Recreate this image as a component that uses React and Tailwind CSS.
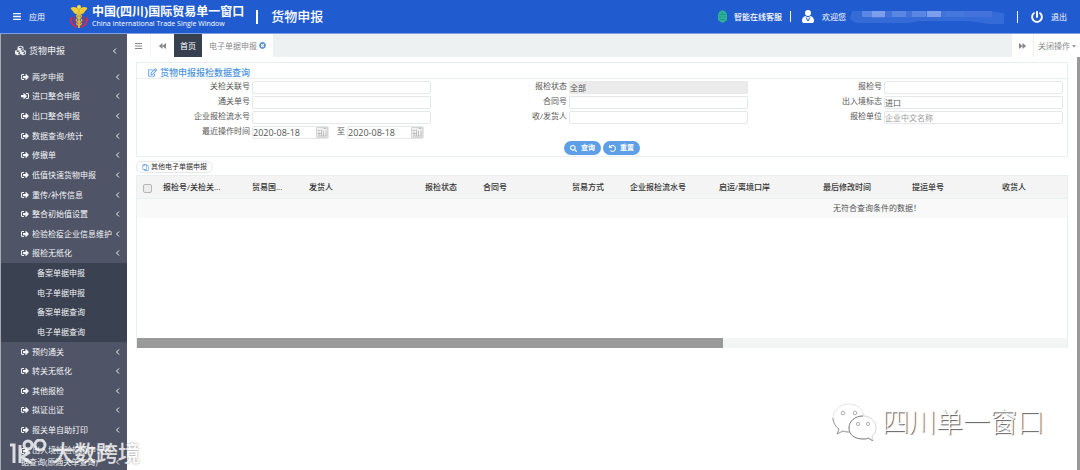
import React, { useState } from "react";
import {
  FaBackward,
  FaBars,
  FaCaretDown,
  FaCubes,
  FaForward,
  FaPowerOff,
  FaRegCopy,
  FaRegEdit,
  FaSearch,
  FaSignInAlt,
  FaSignOutAlt,
  FaTimesCircle,
  FaUndo,
} from "react-icons/fa";

const menuTop = [
  { label: "两步申报" },
  { label: "进口整合申报", icon: "in" },
  { label: "出口整合申报" },
  { label: "数据查询/统计" },
  { label: "修撤单" },
  { label: "低值快速货物申报" },
  { label: "重传/补传信息" },
  { label: "整合初始值设置" },
  { label: "检验检疫企业信息维护" },
  { label: "报检无纸化" },
];

const subMenu = ["备案单据申报", "电子单据申报", "备案单据查询", "电子单据查询"];

const menuBottom = [
  { label: "预约通关" },
  { label: "转关无纸化" },
  { label: "其他报检" },
  { label: "拟证出证" },
  { label: "报关单自助打印" },
];

const columns = [
  { label: "报检号/关检关...", width: "w-[89px]" },
  { label: "贸易国...", width: "w-[57px]" },
  { label: "发货人", width: "w-[116px]" },
  { label: "报检状态", width: "w-[58px]" },
  { label: "合同号", width: "w-[89px]" },
  { label: "贸易方式", width: "w-[58px]" },
  { label: "企业报检流水号", width: "w-[89px]" },
  { label: "启运/离境口岸", width: "w-[104px]" },
  { label: "最后修改时间", width: "w-[89px]" },
  { label: "提运单号", width: "w-[90px]" },
  { label: "收货人", width: "w-auto" },
];

// Customs staff emblem
const Emblem = () => (
  <svg viewBox="0 0 36 48" className="h-6 w-[18px]" aria-hidden="true">
    <path d="M3 25c-3 8 1 17 11 19M33 25c3 8-1 17-11 19" fill="none" stroke="#d92b45" strokeWidth="4" />
    <path d="M9 22c-4 7 0 14 9 17 9-3 13-10 9-17" fill="none" stroke="#c02c4c" strokeWidth="3" />
    <path d="M17 9C12 3 6 3 1 6c2 2 2 5 5 6 1 4 4 6 7 6l4 2zM19 9c5-6 11-6 16-3-2 2-2 5-5 6-1 4-4 6-7 6l-4 2z" fill="#f3cd32" />
    <circle cx="18" cy="4" r="4" fill="#f8dc4a" />
    <path d="M18 6v40" stroke="#f3cd32" strokeWidth="3" />
    <path d="M12 17c12 2 14 6 6 9s-7 6 0 8 6 5 0 7M24 17c-12 2-14 6-6 9s7 6 0 8-6 5 0 7" fill="none" stroke="#e8c12f" strokeWidth="2.5" />
  </svg>
);

const Robot = () => (
  <svg viewBox="0 0 20 26" className="h-[13px] w-[11px]" aria-hidden="true">
    <path d="M10 0l7 4 2 5v11l-4 3-5 3-5-3-4-3V9l2-5z" fill="#2bb292" />
    <path d="M4 9h12M4 14h4M12 14h4M5 19h10M10 4v3" stroke="#1f8a92" strokeWidth="1.4" />
  </svg>
);

const Person = () => (
  <svg viewBox="0 0 24 26" className="h-[13px] w-3" aria-hidden="true">
    <circle cx="12" cy="6" r="6" fill="#fff" />
    <path d="M7 12c-5 1-7 5-7 10 0 3 2 4 4 4h16c2 0 4-1 4-4 0-5-2-9-7-10l-5 3z" fill="#fff" />
    <path d="M8 15l4 7 4-7" fill="none" stroke="#215bd0" strokeWidth="2" />
  </svg>
);

// Masked user name
const MaskedName = () => (
  <svg viewBox="0 0 154 15" className="h-[15px] w-[154px]" aria-hidden="true">
    <path d="M2 2h136l16 2v11h-14l-22-3H70l-12 2H6l-6-4z" fill="#356bd6" />
    <path d="M12 2h130v6H12z" fill="#4272da" />
    <path d="M12 2h10v6H12zM42 2h14v6H42zM62 2h14v6H62z" fill="#5a87e2" />
    <path d="M22 2h12v7H22zM96 2h18v6H96z" fill="#4677dc" />
    <path d="M22 2h13v6H22zM77 2h14v6H77z" fill="#7b9fec" />
  </svg>
);

const Calendar = () => (
  <svg viewBox="0 0 24 24" className="h-3 w-3" aria-hidden="true">
    <path d="M1 3h22v20H1z" fill="#f1f1f1" stroke="#d5d5d5" strokeWidth="2" />
    <path d="M3 9h6M15 5h6M6 12v8M11 7v13M15 10v10M20 9v11M4 20h17M3 15h9" fill="none" stroke="#b5b5b5" strokeWidth="1.6" />
  </svg>
);

const Chevron = () => (
  <svg viewBox="0 0 5 8" className="h-2 w-[5px] shrink-0" aria-hidden="true">
    <path d="M4 1.5L1.5 4 4 6.5" fill="none" stroke="currentColor" />
  </svg>
);

const MenuItem = ({ label, icon }) => (
  <li className="flex flex-1">
    <a href="#" className="flex flex-1 items-center pl-5 pr-[7px]">
      {icon === "in" ? (
        <FaSignInAlt className="mr-[3px] h-2 w-2 shrink-0" />
      ) : (
        <FaSignOutAlt className="mr-[3px] h-2 w-2 shrink-0" />
      )}
      <span className="flex-1 whitespace-nowrap">{label}</span>
      <Chevron />
    </a>
  </li>
);

const Field = ({ id, label, value = "", placeholder, disabled }) => (
  <div className="flex h-[13px] justify-end">
    <label htmlFor={id} className="mr-[2px] leading-[10px]">
      {label}
    </label>
    <input
      id={id}
      type="text"
      defaultValue={value}
      placeholder={placeholder}
      readOnly={disabled}
      className={
        disabled
          ? "h-[13px] w-[179px] rounded-[2px] border border-[#e8e8e8] bg-[#ebebeb] leading-[11px] outline-none"
          : "h-[13px] w-[179px] rounded-[2px] border border-[#e5e8ea] bg-white leading-[11px] outline-none placeholder:text-[#999]"
      }
    />
  </div>
);

const DateField = ({ id, label, value, onChange }) => (
  <div className="flex h-[13px] w-[77px] rounded-[2px] border border-[#e5e8ea]">
    <input
      id={id}
      type="text"
      aria-label={label}
      value={value}
      onChange={(e) => onChange(e.target.value)}
      className="w-0 flex-1 text-[9px] leading-[11px] outline-none"
    />
    <button type="button" aria-label="选择日期" className="-mt-px">
      <Calendar />
    </button>
  </div>
);

const App = () => {
  const [startDate, setStartDate] = useState("2020-08-18");
  const [endDate, setEndDate] = useState("2020-08-18");

  return (
    <div className="relative flex min-h-screen flex-col overflow-hidden bg-white font-['Open_Sans','Noto_Sans_CJK_SC',sans-serif] text-[8px] text-[#555]">
      <header className="flex h-[34px] items-center border-b border-[#7fa1e3] bg-[#215bd0] pl-[13px] pr-[13px] text-white">
        <button type="button" className="flex w-[57px] items-center gap-2">
          <FaBars className="h-[9px] w-2" />
          应用
        </button>
        <Emblem />
        <div className="ml-1 whitespace-nowrap">
          <div className="text-[12px] font-bold leading-[14px]">中国(四川)国际贸易单一窗口</div>
          <div className="text-[7px] font-medium leading-[9px]">China International Trade Single Window</div>
        </div>
        <span className="ml-3 h-[14px] w-[2px] bg-white" />
        <h1 className="ml-[13px] whitespace-nowrap text-[13px] font-medium">货物申报</h1>
        <div className="ml-auto flex items-center whitespace-nowrap">
          <Robot />
          <a href="#" className="ml-1.5 font-medium">智能在线客服</a>
          <span className="ml-2 mr-[11px] h-[11px] w-px bg-white" />
          <Person />
          <span className="ml-2 mr-1">欢迎您</span>
          <MaskedName />
          <span className="ml-[13px] mr-[13px] h-3 w-px bg-white" />
          <FaPowerOff className="h-3 w-3" />
          <a href="#" className="ml-2">退出</a>
        </div>
      </header>

      <div className="flex flex-1">
        <nav className="flex w-[127px] shrink-0 flex-col border-l border-[#a4a9b5] bg-[#4f5467] text-[#f3f4f6]">
          <a href="#" className="flex h-[33px] items-center pl-3.5 pr-2.5 text-[9px]">
            <FaCubes className="mr-[3px] h-[11px] w-[11px]" />
            <span className="flex-1">货物申报</span>
            <Chevron />
          </a>
          <ul className="flex flex-1 flex-col leading-[12px]">
            {menuTop.map((item) => (
              <MenuItem key={item.label} label={item.label} icon={item.icon} />
            ))}
            <li className="flex flex-[4] bg-[#3a4150]">
              <ul className="flex flex-1 flex-col">
                {subMenu.map((label) => (
                  <li key={label} className="flex flex-1 items-center pl-9">
                    <a href="#">{label}</a>
                  </li>
                ))}
              </ul>
            </li>
            {menuBottom.map((item) => (
              <MenuItem key={item.label} label={item.label} />
            ))}
          </ul>
          <a href="#" className="flex h-[30px] items-end pl-5 pr-[7px] leading-[12px]">
            <span className="flex-1 whitespace-nowrap pb-[2px]">
              <FaSignOutAlt className="mr-[3px] inline h-2 w-2" />
              出入境检验检疫申请数
              <br />
              据查询(原通关单查询)
            </span>
            <span className="pb-1">
              <Chevron />
            </span>
          </a>
        </nav>

        <div className="flex min-w-0 flex-1 flex-col">
          <div className="flex h-[23px] bg-[#eef1f2] text-[#888]">
            <button type="button" aria-label="菜单" className="flex w-6 items-center justify-center border-r border-[#f3f3f3] bg-white">
              <FaBars className="h-2 w-[7px]" />
            </button>
            <button type="button" aria-label="向左" className="flex w-[23px] items-center justify-center bg-white">
              <FaBackward className="h-2 w-[7px]" />
            </button>
            <a href="#" className="flex w-[28px] items-center justify-center bg-[#36404e] text-white">首页</a>
            <a href="#" className="flex w-[71px] items-center justify-center gap-0.5 bg-white">
              电子单据申报
              <FaTimesCircle className="h-[7px] w-[7px] text-[#5f93cf]" />
            </a>
            <button type="button" aria-label="向右" className="ml-auto flex w-[22px] items-center justify-center border-r border-[#f0f0f0] bg-white">
              <FaForward className="h-2 w-[7px]" />
            </button>
            <button type="button" className="flex w-[46px] items-center justify-center gap-0.5 bg-white">
              关闭操作
              <FaCaretDown className="h-[6px] w-1" />
            </button>
          </div>

          <div className="flex flex-1">
            <main className="min-w-0 flex-1 pl-[9px] pr-[9px] pt-[5px]">
              <section className="border border-[#e9eff1]">
                <h2 className="flex h-4 items-center gap-[3px] border-b border-[#e9eff1] pl-[11px] pt-1 text-[9px] font-medium text-[#4b93de]">
                  <FaRegEdit className="h-[9px] w-[9px]" />
                  货物申报报检数据查询
                </h2>
                <form onSubmit={(e) => e.preventDefault()}>
                  <div className="grid grid-cols-[294fr_317fr_315fr] pr-1 pt-[2px]">
                    <div className="flex flex-col gap-[2px]">
                      <Field id="relateNo" label="关检关联号" />
                      <Field id="clearanceNo" label="通关单号" />
                      <Field id="flowNo" label="企业报检流水号" />
                      <div className="flex h-[13px] justify-end">
                        <label htmlFor="startDate" className="mr-[2px] leading-[10px]">最近操作时间</label>
                        <div className="flex w-[179px]">
                          <DateField id="startDate" label="最近操作时间" value={startDate} onChange={setStartDate} />
                          <label htmlFor="endDate" className="ml-2 mr-[2px] leading-[10px]">至</label>
                          <DateField id="endDate" label="至" value={endDate} onChange={setEndDate} />
                        </div>
                      </div>
                    </div>
                    <div className="flex flex-col gap-[2px]">
                      <Field id="status" label="报检状态" value="全部" disabled />
                      <Field id="contractNo" label="合同号" />
                      <Field id="consignee" label="收/发货人" />
                    </div>
                    <div className="flex flex-col gap-[2px]">
                      <Field id="declNo" label="报检号" />
                      <Field id="ieFlag" label="出入境标志" value="进口" />
                      <Field id="declOrg" label="报检单位" placeholder="企业中文名称" />
                    </div>
                  </div>
                  <div className="flex justify-center gap-[2px] pb-px pt-[2px] text-[7px] font-bold text-white">
                    <button type="submit" className="flex h-[14px] w-[37px] items-center justify-center gap-1 rounded-full bg-[#5d9ee6]">
                      <FaSearch className="h-[7px] w-[7px]" />
                      查询
                    </button>
                    <button type="reset" className="flex h-[14px] w-[37px] items-center justify-center gap-1 rounded-full bg-[#5d9ee6]">
                      <FaUndo className="h-[7px] w-[7px]" />
                      重置
                    </button>
                  </div>
                </form>
              </section>

              <button type="button" className="mt-1 flex h-3 items-center gap-[2px] rounded-full border border-[#e5e8ea] px-[5px] text-[7px] text-[#333]">
                <FaRegCopy className="h-[7px] w-[7px] -scale-x-100 text-[#5d9ee6]" />
                其他电子单据申报
              </button>

              <div className="mt-[2px] border-x border-t border-[#e9eff1]">
                <div className="h-[162px] overflow-hidden">
                  <table className="w-[1480px] table-fixed text-left text-[#333]">
                    <thead>
                      <tr className="h-[22px] border-b border-[#eaf0f2] bg-[#f4f4f4]">
                        <th className="w-[21px] pl-[6px] align-middle">
                          <input
                            type="checkbox"
                            aria-label="全选"
                            className="mt-[3px] block h-[9px] w-[9px] appearance-none rounded-[2px] border border-[#b5b5b5] bg-[#ececec]"
                          />
                        </th>
                        {columns.map((col) => (
                          <th key={col.label} className={`${col.width} whitespace-nowrap pl-[5px] font-medium`}>
                            {col.label}
                          </th>
                        ))}
                      </tr>
                    </thead>
                    <tbody>
                      <tr className="h-5 bg-[#f9f9f9]">
                        <td colSpan={12} className="text-center text-[#555]">
                          无符合查询条件的数据！
                        </td>
                      </tr>
                    </tbody>
                  </table>
                </div>
                <div className="h-[10px] bg-[#f3f4f4]">
                  <div className="h-full w-[63%] bg-[#999]" />
                </div>
              </div>
            </main>
            <div className="w-[3px] bg-[#999]" />
          </div>
        </div>
      </div>

      <div className="pointer-events-none absolute bottom-[29px] right-9 flex items-center gap-1">
        <svg viewBox="0 0 46 38" className="h-[38px] w-[46px]" aria-hidden="true">
          <path d="M17 1C8 1 1 7 1 15c0 5 3 9 6 11l-2 5 6-3c2 1 5 1 7 1 0-9 6-15 14-16C30 5 24 1 17 1z" fill="#fff" stroke="#ddd" strokeWidth="0.8" />
          <path d="M1 15c0 5 3 9 6 11l-2 5 6-3c2 1 5 1 7 1" fill="none" stroke="#999" />
          <path d="M31 13c-8 0-14 5-14 12s6 11 14 11c2 0 4 0 5-1l5 3-1-5c3-2 4-5 4-8 0-7-6-12-13-12z" fill="#fff" stroke="#ccc" strokeWidth="0.8" />
          <path d="M31 13c-8 0-14 5-14 12s6 11 14 11c2 0 4 0 5-1l5 3" fill="none" stroke="#888" />
          <g fill="#fff" stroke="#999" strokeWidth="0.8">
            <circle cx="11" cy="10" r="1.8" />
            <circle cx="23" cy="10" r="1.8" />
            <circle cx="26" cy="21" r="1.6" />
            <circle cx="36" cy="21" r="1.6" />
          </g>
        </svg>
        <span className="whitespace-nowrap text-[27px] font-light leading-[36px] text-white [text-shadow:1px_1px_1px_#555]">四川单一窗口</span>
      </div>

      <div className="pointer-events-none absolute bottom-[5px] left-2 flex items-center gap-1 opacity-80">
        <svg viewBox="0 0 40 26" className="h-[26px] w-10" aria-hidden="true">
          <g fill="none" stroke="#fff" strokeWidth="3">
            <path d="M2 6h4v18M12 6v18M22 13l-8 5 9 6" />
            <circle cx="20" cy="6" r="4" />
            <circle cx="32" cy="6" r="5" />
            <path d="M24 6h4" />
          </g>
        </svg>
        <span className="whitespace-nowrap text-[22px] font-medium leading-[26px] text-white [text-shadow:0_0_2px_#666]">大数跨境</span>
      </div>
    </div>
  );
};

export default App;
